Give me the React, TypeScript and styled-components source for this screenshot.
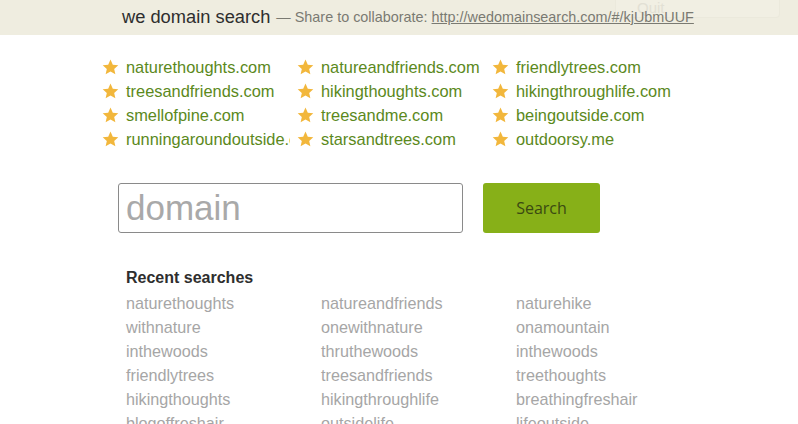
import styled, { createGlobalStyle } from 'styled-components';

const GlobalStyle = createGlobalStyle`
  body {
    margin: 0;
    background: #fff;
    font-family: "Liberation Sans", Arial, sans-serif;
    overflow: hidden;
  }
`;

const Header = styled.header`
  position: relative;
  height: 35px;
  background: #efede0;
  display: flex;
  align-items: center;
  padding-left: 122px;
  padding-bottom: 2px;
  box-sizing: border-box;
  white-space: nowrap;
`;

const Title = styled.span`
  font-size: 18.3px;
  color: #2e2e2e;
`;

const Share = styled.span`
  position: relative;
  z-index: 1;
  margin-left: 6px;
  font-size: 14.4px;
  color: #7a7a72;
  a {
    color: #7a7a72;
    text-decoration: underline;
  }
`;

const QuitButton = styled.div`
  position: absolute;
  left: 615px;
  top: -10px;
  width: 165px;
  height: 28px;
  box-sizing: border-box;
  border: 1px solid #ebe9dc;
  border-radius: 4px;
  background: #f1efe3;
  color: #e2e0d4;
  font-size: 15px;
  padding: 8px 0 0 21px;
`;

const Main = styled.main`
  padding: 20px 0 0 102px;
`;

const Favorites = styled.ul`
  list-style: none;
  margin: 0;
  padding: 0;
  display: grid;
  grid-template-columns: repeat(3, 195px);
  grid-auto-rows: 24px;
`;

const Favorite = styled.li`
  display: flex;
  align-items: center;
  margin-right: 7px;
  font-size: 16.4px;
  color: #5b891c;
  white-space: nowrap;
  overflow: hidden;
  svg {
    flex: none;
    margin-right: 7px;
  }
`;

const SearchRow = styled.div`
  display: flex;
  gap: 20px;
  margin: 32px 0 0 16px;
`;

const DomainInput = styled.input`
  width: 345px;
  height: 50px;
  box-sizing: border-box;
  border: 1px solid #8a8a8a;
  border-radius: 3px;
  padding: 0 7px;
  font-family: "Liberation Sans", Arial, sans-serif;
  font-size: 35px;
  color: #333;
  outline: none;
  &::placeholder {
    color: #a9a9a9;
  }
`;

const SearchButton = styled.button`
  width: 117px;
  height: 50px;
  border: none;
  border-radius: 3px;
  background: #87b018;
  color: #3b4a12;
  font-family: "Open Sans", sans-serif;
  font-size: 16px;
  cursor: pointer;
`;

const Recent = styled.section`
  margin: 36px 0 0 24px;
`;

const RecentTitle = styled.h3`
  margin: 0 0 4px;
  font-size: 16px;
  font-weight: bold;
  color: #2e2e2e;
`;

const RecentList = styled.ul`
  list-style: none;
  margin: 0;
  padding: 0;
  display: grid;
  grid-template-columns: repeat(3, 195px);
  grid-auto-rows: 24px;
`;

const RecentItem = styled.li`
  font-size: 16.2px;
  color: #a6a6a6;
  line-height: 24px;
`;

const favorites = [
  'naturethoughts.com',
  'natureandfriends.com',
  'friendlytrees.com',
  'treesandfriends.com',
  'hikingthoughts.com',
  'hikingthroughlife.com',
  'smellofpine.com',
  'treesandme.com',
  'beingoutside.com',
  'runningaroundoutside.com',
  'starsandtrees.com',
  'outdoorsy.me',
];

const recent = [
  'naturethoughts', 'natureandfriends', 'naturehike',
  'withnature', 'onewithnature', 'onamountain',
  'inthewoods', 'thruthewoods', 'inthewoods',
  'friendlytrees', 'treesandfriends', 'treethoughts',
  'hikingthoughts', 'hikingthroughlife', 'breathingfreshair',
  'blogoffreshair', 'outsidelife', 'lifeoutside',
];

function Star() {
  return (
    <svg width="17" height="16" viewBox="0 0 24 23">
      <path
        d="M12 0.8l3.3 7.3 7.9 0.8-5.9 5.4 1.7 7.8L12 18.1l-7 4 1.7-7.8L0.8 8.9l7.9-0.8z"
        fill="#f2b73c"
      />
    </svg>
  );
}

function App() {
  return (
    <>
      <GlobalStyle />
      <Header>
        <Title>we domain search</Title>
        <Share>
          — Share to collaborate:{' '}
          <a href="#kjUbmUUF">http://wedomainsearch.com/#/kjUbmUUF</a>
        </Share>
        <QuitButton>Quit</QuitButton>
      </Header>
      <Main>
        <Favorites>
          {favorites.map((name) => (
            <Favorite key={name}>
              <Star />
              {name}
            </Favorite>
          ))}
        </Favorites>
        <SearchRow>
          <DomainInput placeholder="domain" />
          <SearchButton type="button">Search</SearchButton>
        </SearchRow>
        <Recent>
          <RecentTitle>Recent searches</RecentTitle>
          <RecentList>
            {recent.map((name, i) => (
              <RecentItem key={i}>{name}</RecentItem>
            ))}
          </RecentList>
        </Recent>
      </Main>
    </>
  );
}

export default App;
